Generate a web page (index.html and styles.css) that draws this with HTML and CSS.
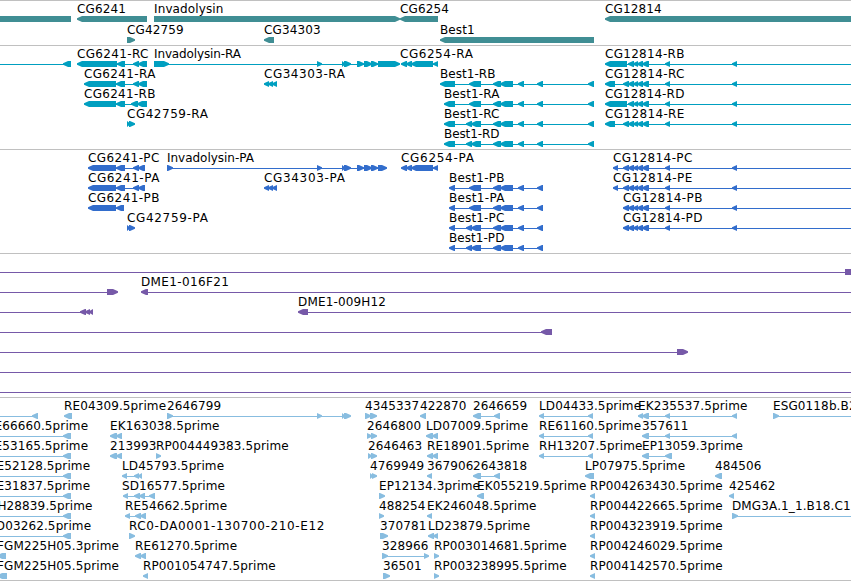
FILE: index.html
```html
<!DOCTYPE html>
<html lang="en">
<head>
  <meta charset="UTF-8">
  <title>Genome Browser</title>
  <link rel="stylesheet" href="styles.css">
</head>
<body>
  <main class="browser">
    <section class="track genes" id="genes"></section>
    <section class="track transcripts" id="transcripts"></section>
    <section class="track proteins" id="proteins"></section>
    <section class="track clones" id="clones"></section>
    <section class="track ests" id="ests"></section>
  </main>
  <script src="tracks.js"></script>
</body>
</html>
```
FILE: styles.css
```css
body {
  margin: 0;
  background: #fff;
  color: #000;
  font-family: "DejaVu Sans", sans-serif;
  font-size: 12px;
  overflow: hidden;
}
.browser {
  width: 851px;
  border-bottom: 1px solid #c0c0c0;
}
.track {
  border-top: 1px solid #c0c0c0;
  padding: 2px 0 1px;
}
.row {
  display: block;
  width: 851px;
  height: 20px;
  overflow: hidden;
}
.row text {
  fill: #000;
  letter-spacing: 0.12px;
}
.genes {
  fill: #408e94;
  padding-bottom: 0;
}
.genes .row {
  height: 21px;
}
.transcripts {
  fill: #009fc0;
}
.proteins {
  fill: #326dcc;
}
.clones {
  fill: #7659a8;
}
.ests {
  fill: #88bde0;
  padding-bottom: 0;
}
```
FILE: tracks.js
```js
// feature: [label, strand, [[start, end], ...], label position if not the start]
const LEFT = -20;
const RIGHT = 880;

const bestTail = [[493, 500], [500, 513], [518, 524], [537, 543]];
const bestA = [[469, 481], ...bestTail];
const bestC = [[466, 471], [471, 481], ...bestTail];
const cgTail = [[633, 637], [637, 642], [642, 649], [665, 670], [732, 737], [RIGHT, RIGHT + 9]];
const cgB = [[628, 633], ...cgTail];
const cgC = [[623, 628], ...cgB];
const cg6254 = [[401, 406], [406, 411], [411, 433], [433, 438]];
const cg34303 = [[264, 268], [268, 272], [272, 277]];
const cg42759 = [[127, 130], [130, 135]];
const invadolysin = [[317, 322], [342, 345], [345, 351], [357, 364], [364, 372], [372, 378]];
const off = [LEFT, LEFT + 8];

const tracks = {
  genes: [
    [
      ['', '>', [[LEFT, 71, 'flat']]],
      ['CG6241', '<', [[77, 147]]],
      ['Invadolysin', '>', [[154, 400]]],
      ['CG6254', '<', [[400, 438]]],
      ['CG12814', '<', [[605, RIGHT]]]
    ],
    [
      ['CG42759', '>', [[127, 135]]],
      ['CG34303', '<', [[264, 274]]],
      ['Best1', '<', [[440, 594]]]
    ]
  ],
  transcripts: [
    [
      ['', '<', [off, [63, 71]]],
      ['CG6241-RC', '<', [[77, 117], [117, 125], [133, 138], [138, 147]]],
      ['Invadolysin-RA', '>', [[154, 169], ...invadolysin, [378, 400]]],
      ['CG6254-RA', '<', cg6254, 400],
      ['CG12814-RB', '<', [[605, 627], ...cgB]]
    ],
    [
      ['CG6241-RA', '<', [[84, 116], [116, 125], [133, 138], [138, 147]]],
      ['CG34303-RA', '<', cg34303],
      ['Best1-RB', '<', [[440, 455], ...bestA, [588, 594]]],
      ['CG12814-RC', '<', [[605, 615], ...cgC]]
    ],
    [
      ['CG6241-RB', '<', [[84, 116], [116, 125], [131, 137], [137, 147]]],
      ['Best1-RA', '<', [[444, 455], ...bestA, [588, 594]]],
      ['CG12814-RD', '<', [[605, 627], ...cgB]]
    ],
    [
      ['CG42759-RA', '>', cg42759],
      ['Best1-RC', '<', [[444, 455], ...bestC, [588, 594]]],
      ['CG12814-RE', '<', [[605, 615], ...cgC]]
    ],
    [
      ['Best1-RD', '<', [[444, 455], ...bestC, [588, 594]]]
    ]
  ],
  proteins: [
    [
      ['CG6241-PC', '<', [[88, 116], [116, 125], [133, 138], [138, 145]]],
      ['Invadolysin-PA', '>', [[167, 173], ...invadolysin, [378, 387]]],
      ['CG6254-PA', '<', cg6254],
      ['CG12814-PC', '<', [[613, 618], ...cgC]]
    ],
    [
      ['CG6241-PA', '<', [[88, 116], [116, 125], [133, 138], [138, 145]]],
      ['CG34303-PA', '<', cg34303],
      ['Best1-PB', '<', [[449, 455], ...bestA]],
      ['CG12814-PE', '<', [[613, 618], ...cgC]]
    ],
    [
      ['CG6241-PB', '<', [[88, 116], [116, 124]]],
      ['Best1-PA', '<', [[449, 455], ...bestA]],
      ['CG12814-PB', '<', [[623, 628], ...cgB]]
    ],
    [
      ['CG42759-PA', '>', cg42759],
      ['Best1-PC', '<', [[449, 455], ...bestC]],
      ['CG12814-PD', '<', [[623, 628], ...cgB]]
    ],
    [
      ['Best1-PD', '<', [[449, 455], ...bestC]]
    ]
  ],
  clones: [
    [['', '>', [off, [845, RIGHT]]]],
    [
      ['', '>', [off, [107, 118]]],
      ['DME1-016F21', '<', [[141, 148], [RIGHT, RIGHT + 9]]]
    ],
    [
      ['', '<', [off, [80, 85], [85, 89], [89, 93]]],
      ['DME1-009H12', '<', [[298, 308], [RIGHT, RIGHT + 9]]]
    ],
    [['', '<', [off, [541, 552]]]],
    [['', '>', [off, [677, 688]]]],
    [['', '>', [off, [RIGHT, RIGHT + 9]]]],
    [['', '>', [off, [RIGHT, RIGHT + 9]]]]
  ],
  ests: [
    [
      ['', '<', [off, [32, 38]]],
      ['RE04309.5prime', '<', [[64, 72]]],
      ['2646799', '>', [[167, 173], [317, 322], [342, 345], [345, 351]]],
      ['4345337', '>', [[365, 371], [371, 377]]],
      ['422870', '<', [[420, 426]]],
      ['2646659', '<', [[473, 481], [494, 500]]],
      ['LD04433.5prime', '<', [[539, 544], [588, 593]]],
      ['EK235537.5prime', '<', [[638, 642], [642, 649], [665, 670], [732, 737]]],
      ['ESG0118b.B2', '>', [[773, 779], [RIGHT, RIGHT + 9]]]
    ],
    [
      ['RE66660.5prime', '<', [off, [63, 71]], -14],
      ['EK163038.5prime', '<', [[110, 116], [116, 122]]],
      ['2646800', '>', [[367, 372], [372, 377]]],
      ['LD07009.5prime', '<', [[426, 432], [432, 438]]],
      ['RE61160.5prime', '<', [[539, 544], [588, 593]]],
      ['357611', '<', [[642, 649], [665, 670], [732, 737]]]
    ],
    [
      ['RE53165.5prime', '<', [off, [63, 71]], -14],
      ['213993', '<', [[110, 116], [116, 122]]],
      ['RP004449383.5prime', '>', [[156, 161]]],
      ['2646463', '>', [[368, 372], [372, 377]]],
      ['RE18901.5prime', '<', [[427, 432], [432, 438]]],
      ['RH13207.5prime', '<', [[539, 544], [588, 593]]],
      ['EP13059.3prime', '<', [[642, 649], [665, 672]]]
    ],
    [
      ['RE52128.5prime', '<', [off, [63, 71]], -12],
      ['LD45793.5prime', '<', [[122, 127], [134, 138], [138, 142]]],
      ['4769949', '>', [[370, 373], [373, 377]]],
      ['367906', '<', [[427, 432]]],
      ['2643818', '<', [[473, 481], [494, 500]]],
      ['LP07975.5prime', '<', [[585, 594]]],
      ['484506', '<', [[715, 722]]]
    ],
    [
      ['RE31837.5prime', '<', [off, [63, 71]], -12],
      ['SD16577.5prime', '<', [[123, 128], [134, 139], [139, 145], [149, 155]], 122],
      ['EP12134.3prime', '>', [[379, 385]]],
      ['EK055219.5prime', '<', [[477, 484]]],
      ['RP004263430.5prime', '<', [[590, 595]]],
      ['425462', '<', [[729, 734]]]
    ],
    [
      ['RH28839.5prime', '<', [off, [63, 71]], -11],
      ['RE54662.5prime', '<', [[125, 130], [135, 140], [140, 146]]],
      ['488254', '>', [[379, 384]]],
      ['EK246048.5prime', '<', [[427, 432]]],
      ['RP004422665.5prime', '<', [[590, 595]]],
      ['DMG3A.1_1.B18.C1', '>', [[732, 738], [RIGHT, RIGHT + 9]]]
    ],
    [
      ['LD03262.5prime', '<', [off, [63, 71]], -11],
      ['RC0-DA0001-130700-210-E12', '>', [[129, 135]]],
      ['370781', '>', [[380, 388]]],
      ['LD23879.5prime', '<', [[428, 433], [433, 438]]],
      ['RP004323919.5prime', '<', [[590, 595]]]
    ],
    [
      ['FGM225H05.3prime', '<', [[-3, 6]]],
      ['RE61270.5prime', '<', [[135, 140], [140, 146]]],
      ['328966', '>', [[382, 388], [424, 429]]],
      ['RP003014681.5prime', '>', [[434, 439]]],
      ['RP004246029.5prime', '<', [[590, 595]]]
    ],
    [
      ['FGM225H05.5prime', '<', [[-3, 7]]],
      ['RP001054747.5prime', '<', [[143, 148]]],
      ['36501', '>', [[383, 390]]],
      ['RP003238995.5prime', '>', [[434, 439]]],
      ['RP004142570.5prime', '<', [[590, 595]]]
    ]
  ]
};

// label widths by the part before the dash, for hyphenated names
const widths = {
  'CG6241-': 71.5, 'CG6254-': 73, 'CG12814-': 79.5, 'CG34303-': 81, 'CG42759-': 81,
  'Best1-': 55.5, 'Invadolysin-': 87, 'DME1-': 88, 'RC0-': 195.5
};

// a block with a pointed end on the strand side, 6px high
function block(start, end, strand, flat) {
  if (flat) return `M${start} 13H${end}V19H${start}Z`;
  const d = strand === '<' ? 1 : -1;
  const tip = strand === '<' ? start : end;
  const base = strand === '<' ? end : start;
  const neck = tip + d * Math.min(5, end - start);
  return `M${tip} 15.3L${neck} 13H${base}V19H${neck}L${tip} 16.7Z`;
}

function feature([label, strand, parts, labelX]) {
  const first = parts[0][0];
  const last = parts[parts.length - 1][1];
  // short touching exons run 1px under the head of their neighbour
  const shape = parts.map(([start, end, flat], i) => {
    const next = parts[i + 1];
    const prev = parts[i - 1];
    const short = end - start < 8;
    if (short && strand === '<' && next && next[0] === end) end += 1;
    if (short && strand === '>' && prev && prev[1] === start) start -= 1;
    return block(start, end, strand, flat);
  });
  const line = parts.length > 1 ? `<rect x="${first + 2}" y="16" width="${last - first - 4}" height="1"/>` : '';
  const width = widths[label.slice(0, label.indexOf('-') + 1)];
  const fit = width ? ` textLength="${width}"` : '';
  const text = label ? `<text x="${labelX ?? first}" y="10"${fit}>${label}</text>` : '';
  return `${line}${shape.map(d => `<path d="${d}"/>`).join('')}${text}`;
}

for (const id in tracks) {
  document.getElementById(id).innerHTML = tracks[id]
    .map(row => `<svg class="row">${row.map(feature).join('')}</svg>`)
    .join('');
}
```
